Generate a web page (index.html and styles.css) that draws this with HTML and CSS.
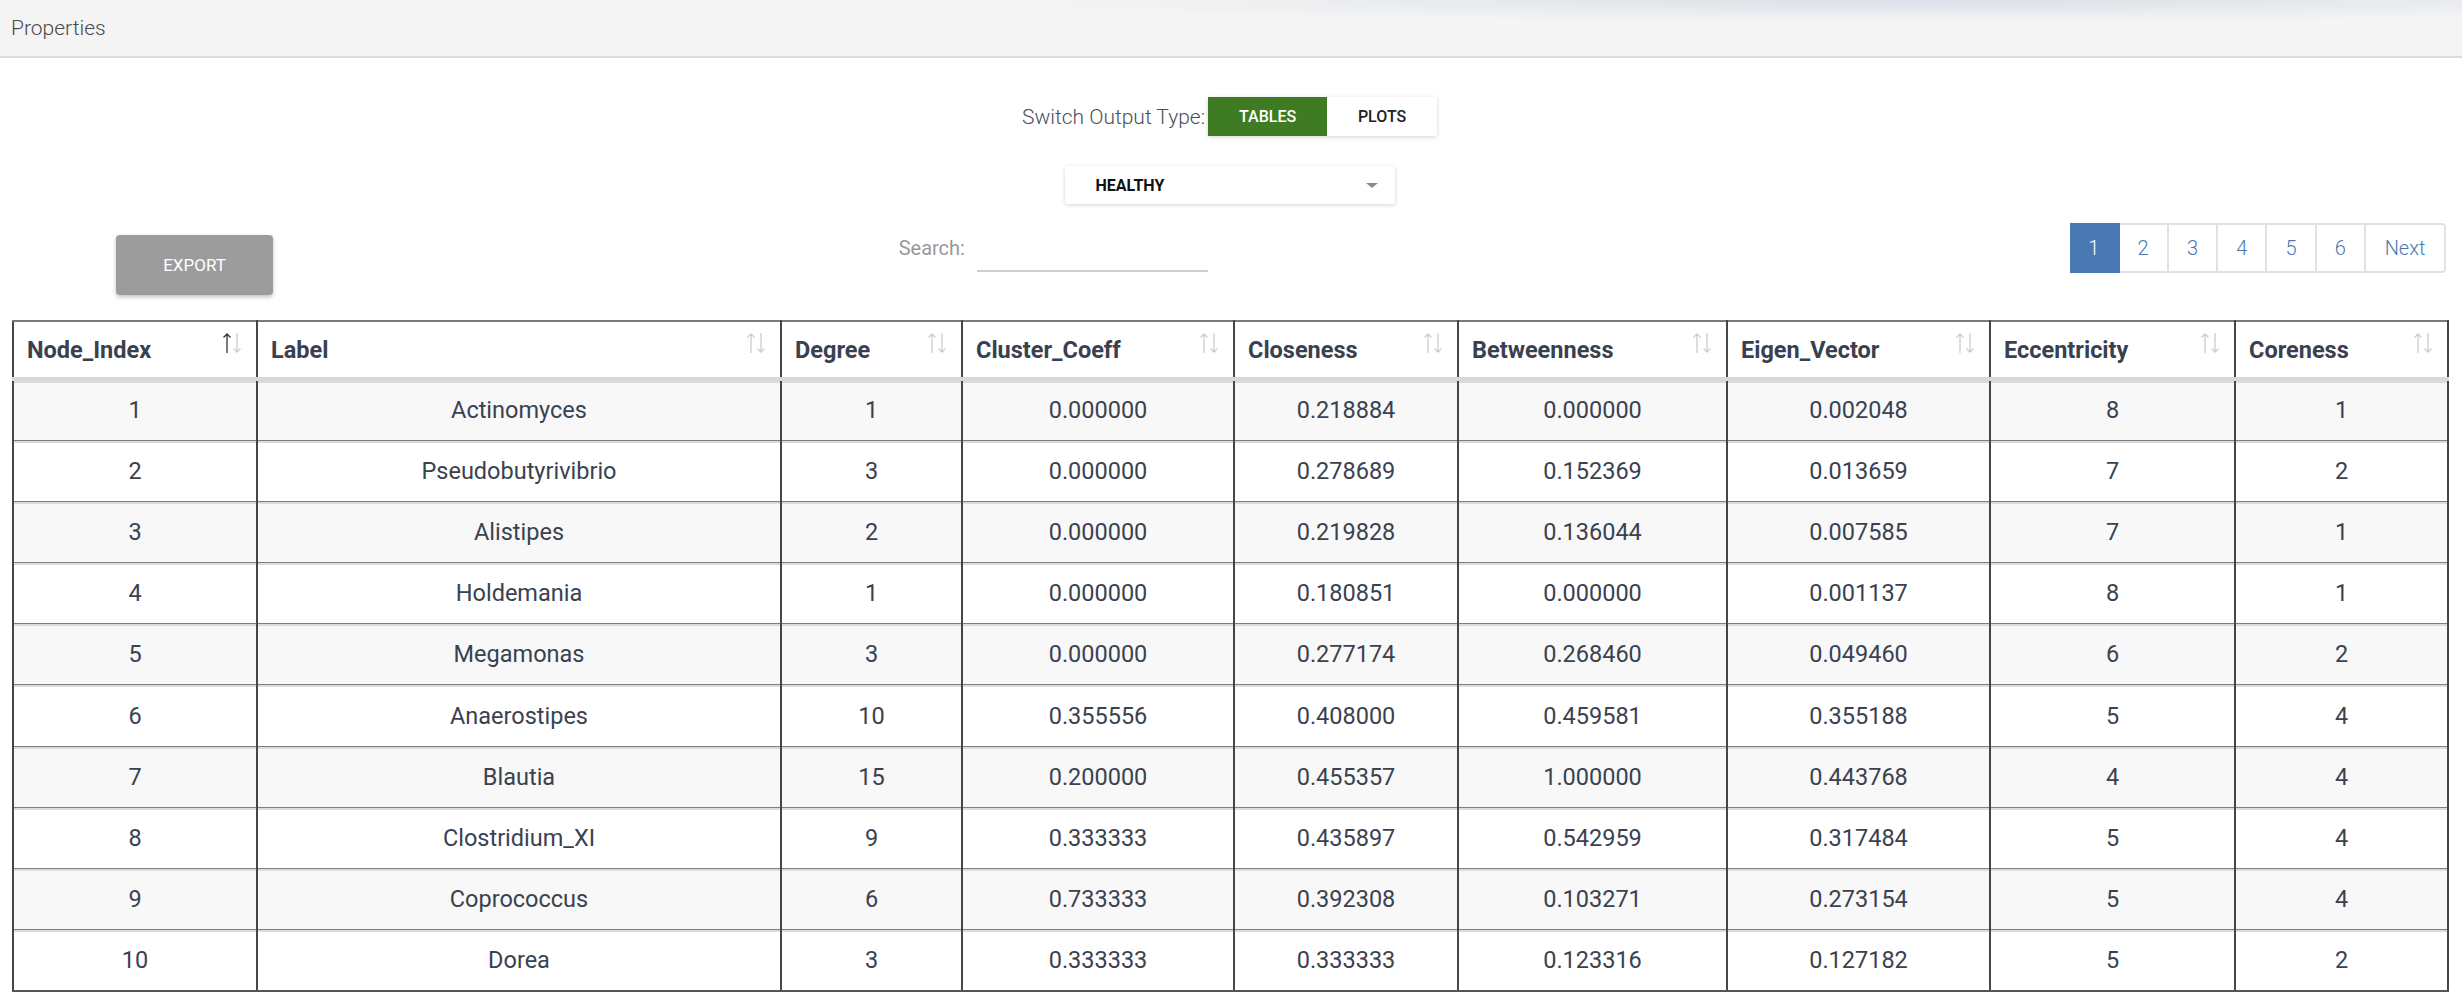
FILE: index.html
```html
<!DOCTYPE html>
<html lang="en">
<head>
<meta charset="utf-8">
<title>Properties</title>
<link rel="stylesheet" href="styles.css">
</head>
<body>
<header class="topbar"><span class="title">Properties</span></header>
<main class="content">
  <div class="switch-row">
    <span class="switch-label">Switch Output Type:</span>
    <div class="toggle">
      <button class="tg tg-active">TABLES</button>
      <button class="tg">PLOTS</button>
    </div>
  </div>
  <div class="select-row">
    <div class="select"><span class="select-text">HEALTHY</span><span class="caret"></span></div>
  </div>
  <div class="tools-row">
    <div class="tools-left"><button class="export">EXPORT</button></div>
    <div class="tools-mid">
      <label class="search"><span class="search-label">Search:</span><span class="search-input"></span></label>
    </div>
    <div class="tools-right">
      <nav class="pager">
        <span class="pg pg-active">1</span>
        <span class="pg">2</span>
        <span class="pg">3</span>
        <span class="pg">4</span>
        <span class="pg">5</span>
        <span class="pg">6</span>
        <span class="pg pg-next">Next</span>
      </nav>
    </div>
  </div>
  <table class="grid">
    <colgroup>
      <col class="c1"><col class="c2"><col class="c3"><col class="c4"><col class="c5"><col class="c6"><col class="c7"><col class="c8"><col class="c9">
    </colgroup>
    <thead>
      <tr>
        <th><div class="th-in"><span>Node_Index</span><svg class="sort sorted-asc" viewBox="0 0 22 22"><path class="up" d="M6 21V2M2.5 5.5L6 2l3.5 3.5"/><path class="down" d="M16 1v19M12.5 16.5L16 20l3.5-3.5"/></svg></div></th>
        <th><div class="th-in"><span>Label</span><svg class="sort" viewBox="0 0 22 22"><path class="up" d="M6 21V2M2.5 5.5L6 2l3.5 3.5"/><path class="down" d="M16 1v19M12.5 16.5L16 20l3.5-3.5"/></svg></div></th>
        <th><div class="th-in"><span>Degree</span><svg class="sort" viewBox="0 0 22 22"><path class="up" d="M6 21V2M2.5 5.5L6 2l3.5 3.5"/><path class="down" d="M16 1v19M12.5 16.5L16 20l3.5-3.5"/></svg></div></th>
        <th><div class="th-in"><span>Cluster_Coeff</span><svg class="sort" viewBox="0 0 22 22"><path class="up" d="M6 21V2M2.5 5.5L6 2l3.5 3.5"/><path class="down" d="M16 1v19M12.5 16.5L16 20l3.5-3.5"/></svg></div></th>
        <th><div class="th-in"><span>Closeness</span><svg class="sort" viewBox="0 0 22 22"><path class="up" d="M6 21V2M2.5 5.5L6 2l3.5 3.5"/><path class="down" d="M16 1v19M12.5 16.5L16 20l3.5-3.5"/></svg></div></th>
        <th><div class="th-in"><span>Betweenness</span><svg class="sort" viewBox="0 0 22 22"><path class="up" d="M6 21V2M2.5 5.5L6 2l3.5 3.5"/><path class="down" d="M16 1v19M12.5 16.5L16 20l3.5-3.5"/></svg></div></th>
        <th><div class="th-in"><span>Eigen_Vector</span><svg class="sort" viewBox="0 0 22 22"><path class="up" d="M6 21V2M2.5 5.5L6 2l3.5 3.5"/><path class="down" d="M16 1v19M12.5 16.5L16 20l3.5-3.5"/></svg></div></th>
        <th><div class="th-in"><span>Eccentricity</span><svg class="sort" viewBox="0 0 22 22"><path class="up" d="M6 21V2M2.5 5.5L6 2l3.5 3.5"/><path class="down" d="M16 1v19M12.5 16.5L16 20l3.5-3.5"/></svg></div></th>
        <th><div class="th-in"><span>Coreness</span><svg class="sort" viewBox="0 0 22 22"><path class="up" d="M6 21V2M2.5 5.5L6 2l3.5 3.5"/><path class="down" d="M16 1v19M12.5 16.5L16 20l3.5-3.5"/></svg></div></th>
      </tr>
    </thead>
    <tbody>
      <tr><td>1</td><td>Actinomyces</td><td>1</td><td>0.000000</td><td>0.218884</td><td>0.000000</td><td>0.002048</td><td>8</td><td>1</td></tr>
      <tr><td>2</td><td>Pseudobutyrivibrio</td><td>3</td><td>0.000000</td><td>0.278689</td><td>0.152369</td><td>0.013659</td><td>7</td><td>2</td></tr>
      <tr><td>3</td><td>Alistipes</td><td>2</td><td>0.000000</td><td>0.219828</td><td>0.136044</td><td>0.007585</td><td>7</td><td>1</td></tr>
      <tr><td>4</td><td>Holdemania</td><td>1</td><td>0.000000</td><td>0.180851</td><td>0.000000</td><td>0.001137</td><td>8</td><td>1</td></tr>
      <tr><td>5</td><td>Megamonas</td><td>3</td><td>0.000000</td><td>0.277174</td><td>0.268460</td><td>0.049460</td><td>6</td><td>2</td></tr>
      <tr><td>6</td><td>Anaerostipes</td><td>10</td><td>0.355556</td><td>0.408000</td><td>0.459581</td><td>0.355188</td><td>5</td><td>4</td></tr>
      <tr><td>7</td><td>Blautia</td><td>15</td><td>0.200000</td><td>0.455357</td><td>1.000000</td><td>0.443768</td><td>4</td><td>4</td></tr>
      <tr><td>8</td><td>Clostridium_XI</td><td>9</td><td>0.333333</td><td>0.435897</td><td>0.542959</td><td>0.317484</td><td>5</td><td>4</td></tr>
      <tr><td>9</td><td>Coprococcus</td><td>6</td><td>0.733333</td><td>0.392308</td><td>0.103271</td><td>0.273154</td><td>5</td><td>4</td></tr>
      <tr><td>10</td><td>Dorea</td><td>3</td><td>0.333333</td><td>0.333333</td><td>0.123316</td><td>0.127182</td><td>5</td><td>2</td></tr>
    </tbody>
  </table>
</main>
</body>
</html>
```
FILE: styles.css
```css
* { box-sizing: border-box; }
html, body { margin: 0; padding: 0; background: #fff; }
body { font-family: Roboto, "Liberation Sans", sans-serif; color: #3a4250; }

.topbar {
  height: 58px;
  border-bottom: 2px solid #dcdcdc;
  background:
    radial-gradient(ellipse 900px 22px at 78% 0, rgba(196, 208, 222, 0.55), rgba(244, 244, 244, 0) 100%),
    #f4f4f4;
  padding-left: 11px;
  display: flex;
  align-items: center;
}
.title { font-size: 21px; font-weight: 300; color: #4a4a4a; }

.content { padding: 0 15px 0 12px; }

.switch-row {
  margin-top: 39px;
  display: flex;
  justify-content: center;
  align-items: center;
  gap: 3px;
}
.switch-label { font-size: 21px; font-weight: 300; color: #4a4f5a; }
.toggle {
  display: flex;
  border-radius: 3px;
  box-shadow: 0 1px 4px rgba(0, 0, 0, 0.18);
}
.tg {
  font-family: Roboto, sans-serif;
  font-size: 16px;
  font-weight: 500;
  height: 39px;
  border: 0;
  background: #fff;
  color: #222;
  padding: 0;
  width: 110px;
  border-radius: 0 3px 3px 0;
}
.tg-active { background: #3e7b22; color: #fff; width: 119px; border-radius: 0; }

.select-row { margin-top: 30px; display: flex; justify-content: center; }
.select {
  width: 330px;
  height: 38px;
  background: #fff;
  border-radius: 3px;
  box-shadow: 0 1px 4px rgba(0, 0, 0, 0.18);
  display: flex;
  align-items: center;
  justify-content: space-between;
  padding: 0 17px 0 31px;
}
.select-text { font-size: 16px; font-weight: 700; color: #111; }
.caret {
  width: 0; height: 0;
  border-left: 6px solid transparent;
  border-right: 6px solid transparent;
  border-top: 5px solid #8a8a8a;
}

.tools-row {
  margin-top: 19px;
  display: grid;
  grid-template-columns: 1fr 1fr 1fr;
  align-items: start;
}
.tools-left { padding-left: 104px; padding-top: 12px; }
.export {
  width: 157px;
  height: 60px;
  border: 0;
  border-radius: 4px;
  background: #9c9c9c;
  color: #fff;
  font-family: Roboto, sans-serif;
  font-size: 17px;
  box-shadow: 0 2px 4px rgba(0, 0, 0, 0.25);
}
.tools-mid { padding-left: 75px; }
.search { display: flex; align-items: flex-start; }
.search-label { font-size: 20px; color: #9a9a9a; margin-top: 13px; line-height: 24px; }
.search-input {
  display: block;
  width: 231px;
  height: 49px;
  margin-left: 12px;
  border-bottom: 2px solid #cfcfcf;
}
.tools-right { display: flex; justify-content: flex-end; padding-right: 1px; }
.pager { display: flex; }
.pg {
  width: 49.3px;
  height: 50px;
  display: flex;
  align-items: center;
  justify-content: center;
  font-size: 20px;
  font-weight: 300;
  color: #4a78b4;
  border: 2px solid #e2e2e2;
  border-left-width: 0;
  background: #fff;
}
.pg-active { background: #4a78b4; color: #fff; border-color: #4a78b4; }
.pg-next { width: 80px; border-radius: 0 4px 4px 0; }

.grid {
  margin-top: 25px;
  width: 2435px;
  table-layout: fixed;
  border-collapse: collapse;
}
.c1 { width: 244px; }
.c2 { width: 524px; }
.c3 { width: 181px; }
.c4 { width: 272px; }
.c5 { width: 224px; }
.c6 { width: 269px; }
.c7 { width: 263px; }
.c8 { width: 245px; }
.c9 { width: 213px; }

.grid th, .grid td {
  border-left: 2px solid #464646;
  border-right: 2px solid #464646;
}
.grid th {
  height: 58px;
  padding: 0 13px 0 13px;
  text-align: left;
  font-size: 23.5px;
  font-weight: 700;
  color: #394150;
  background: #fff;
  border-top: 2px solid #7a7a7a;
  border-bottom: 4px solid #d9d9d9;
}
.th-in { display: flex; justify-content: space-between; align-items: center; }
.sort { width: 22px; height: 22px; margin-bottom: 14px; flex: none; fill: none; stroke-width: 1.3; }
.sort .up, .sort .down { stroke: #cdcdcd; }
.sorted-asc .up { stroke: #333; }

.grid td {
  height: 61.2px;
  padding: 0 10px;
  text-align: center;
  font-size: 23.5px;
  color: #3a4250;
  border-bottom: 1px solid #7e7e7e;
  box-shadow: inset 0 2px 0 #dcdcdc;
}
.grid tbody tr:nth-child(odd) td { background-color: #f8f8f8; }
.grid tbody tr:nth-child(even) td { background-color: #fff; }
.grid tbody tr:last-child td { border-bottom: 2px solid #555; }
```
